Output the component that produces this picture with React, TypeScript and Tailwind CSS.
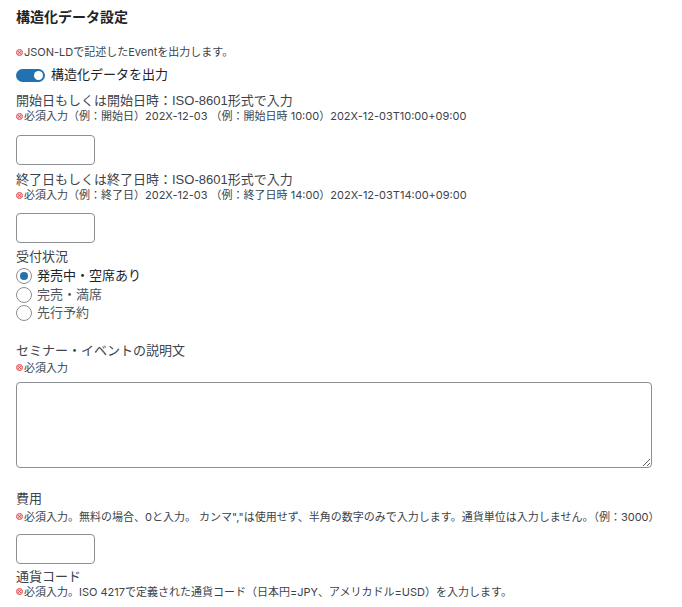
import React from "react";

const font = {
  fontFamily: '"Liberation Sans", "Noto Sans CJK JP", sans-serif',
};

// the notes' Latin glyphs are wider in the reference (Hiragino-like)
const noteFont = {
  fontFamily: 'Inter, "Noto Sans CJK JP", sans-serif',
};

function Mark() {
  return (
    <svg
      aria-hidden="true"
      viewBox="0 0 8 8"
      className="mr-[1px] inline-block h-[7px] w-[7px] shrink-0"
    >
      <circle cx="4" cy="4" r="3.4" fill="#f6c9cc" stroke="#e0424b" strokeWidth="1.1" />
      <path d="M2.6 2.6 5.4 5.4M5.4 2.6 2.6 5.4" stroke="#d63638" strokeWidth="1" />
    </svg>
  );
}

function Note({ children, className = "" }: { children: React.ReactNode; className?: string }) {
  return (
    <p
      className={`flex items-center text-[11px] leading-[14px] text-[#3c434a] ${className}`}
      style={noteFont}
    >
      <Mark />
      <span>{children}</span>
    </p>
  );
}

function Label({ children, className = "" }: { children: React.ReactNode; className?: string }) {
  return <p className={`text-[13px] leading-[18px] text-[#3c434a] ${className}`}>{children}</p>;
}

function SmallInput({ className = "" }: { className?: string }) {
  return (
    <input
      type="text"
      className={`block h-[30px] w-[79px] rounded-[4px] border border-[#8c8f94] bg-white px-2 text-[14px] ${className}`}
    />
  );
}

function Radio({ checked, label }: { checked?: boolean; label: string }) {
  return (
    <label className="flex h-[18.5px] items-center gap-[5px]">
      <span className="flex h-[16px] w-[16px] items-center justify-center rounded-full border border-[#8c8f94] bg-white">
        {checked ? <span className="h-[8px] w-[8px] rounded-full bg-[#2271b1]" /> : null}
      </span>
      <span className={`text-[13px] leading-[18px] ${checked ? "text-[#1d2327]" : "text-[#50575e]"}`}>
        {label}
      </span>
    </label>
  );
}

export default function App() {
  return (
    <div className="min-h-screen bg-white px-4 pt-[7px]" style={font}>
      <h2 className="text-[14px] font-bold leading-[20px] text-[#1d2327]">構造化データ設定</h2>

      <Note className="mt-[18px]">JSON-LDで記述したEventを出力します。</Note>

      <div className="mt-[6px] flex h-[20px] items-center gap-[6px]">
        <span className="flex h-[13px] w-[29px] items-center justify-end rounded-full bg-[#2271b1] pr-[2px]">
          <span className="h-[9px] w-[9px] rounded-full bg-white" />
        </span>
        <span className="text-[13px] leading-[18px] text-[#1d2327]">構造化データを出力</span>
      </div>

      <Label className="mt-[7px]">開始日もしくは開始日時：ISO-8601形式で入力</Label>
      <Note className="mt-[-1px]">
        必須入力（例：開始日）202X-12-03 （例：開始日時 10:00）202X-12-03T10:00+09:00
      </Note>
      <SmallInput className="mt-[12px]" />

      <Label className="mt-[6px]">終了日もしくは終了日時：ISO-8601形式で入力</Label>
      <Note className="mt-[-1px]">
        必須入力（例：終了日）202X-12-03 （例：終了日時 14:00）202X-12-03T14:00+09:00
      </Note>
      <SmallInput className="mt-[11px]" />

      <Label className="mt-[5px]">受付状況</Label>
      <div className="mt-[1px] flex flex-col">
        <Radio checked label="発売中・空席あり" />
        <Radio label="完売・満席" />
        <Radio label="先行予約" />
      </div>

      <Label className="mt-[19px]">セミナー・イベントの説明文</Label>
      <Note className="mt-[1px]">必須入力</Note>
      <textarea className="mt-[7px] block h-[86px] w-[636px] rounded-[4px] border border-[#8c8f94] bg-white" />

      <Label className="mt-[22px]">費用</Label>
      <Note className="mt-[2px]">
        必須入力。無料の場合、0と入力。 カンマ","は使用せず、半角の数字のみで入力します。通貨単位は入力しません。（例：3000）
      </Note>
      <SmallInput className="mt-[10px]" />

      <Label className="mt-[4px]">通貨コード</Label>
      <Note className="mt-[-1px]">
        必須入力。ISO 4217で定義された通貨コード（日本円=JPY、アメリカドル=USD）を入力します。
      </Note>
    </div>
  );
}
